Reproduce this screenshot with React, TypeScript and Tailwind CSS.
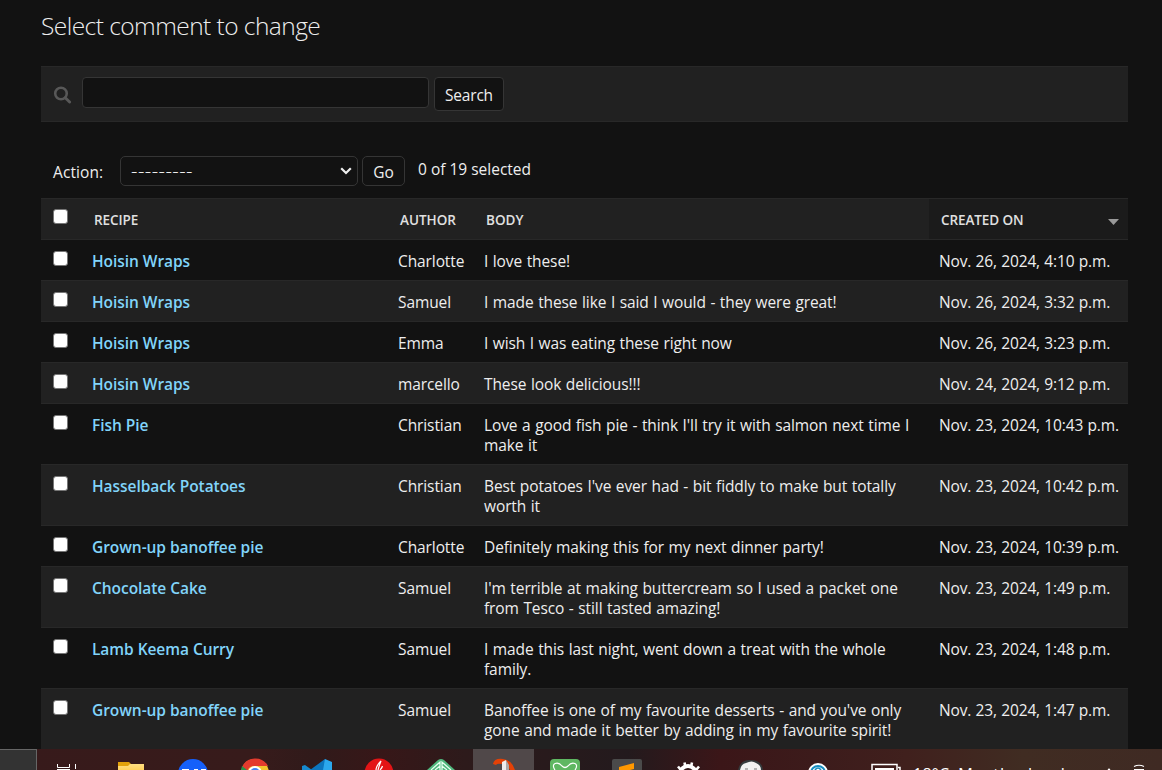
import React from "react";

const rows = [
  ["Hoisin Wraps", "Charlotte", ["I love these!"], "Nov. 26, 2024, 4:10 p.m."],
  ["Hoisin Wraps", "Samuel", ["I made these like I said I would - they were great!"], "Nov. 26, 2024, 3:32 p.m."],
  ["Hoisin Wraps", "Emma", ["I wish I was eating these right now"], "Nov. 26, 2024, 3:23 p.m."],
  ["Hoisin Wraps", "marcello", ["These look delicious!!!"], "Nov. 24, 2024, 9:12 p.m."],
  ["Fish Pie", "Christian", ["Love a good fish pie - think I'll try it with salmon next time I", "make it"], "Nov. 23, 2024, 10:43 p.m."],
  ["Hasselback Potatoes", "Christian", ["Best potatoes I've ever had - bit fiddly to make but totally", "worth it"], "Nov. 23, 2024, 10:42 p.m."],
  ["Grown-up banoffee pie", "Charlotte", ["Definitely making this for my next dinner party!"], "Nov. 23, 2024, 10:39 p.m."],
  ["Chocolate Cake", "Samuel", ["I'm terrible at making buttercream so I used a packet one", "from Tesco - still tasted amazing!"], "Nov. 23, 2024, 1:49 p.m."],
  ["Lamb Keema Curry", "Samuel", ["I made this last night, went down a treat with the whole", "family."], "Nov. 23, 2024, 1:48 p.m."],
  ["Grown-up banoffee pie", "Samuel", ["Banoffee is one of my favourite desserts - and you've only", "gone and made it better by adding in my favourite spirit!"], "Nov. 23, 2024, 1:47 p.m."],
] as [string, string, string[], string][];

const grid = "grid grid-cols-[51px_306px_86px_445px_199px]";

function Box() {
  return <span className="mt-[11px] ml-3 block h-[15px] w-[15px] rounded-[3px] border border-[#767676] bg-white" />;
}

function Taskbar() {
  return (
    <svg className="block h-[21px] w-[1162px] shrink-0" viewBox="0 0 1162 21">
      <defs>
        <linearGradient id="bar">
          <stop offset="0" stopColor="#371a1b" />
          <stop offset=".22" stopColor="#371b1b" />
          <stop offset=".27" stopColor="#301a1a" />
          <stop offset=".33" stopColor="#371718" />
          <stop offset=".4" stopColor="#2d1a1b" />
          <stop offset=".54" stopColor="#231a1d" />
          <stop offset=".62" stopColor="#3b1618" />
          <stop offset=".7" stopColor="#3c1b1b" />
          <stop offset=".78" stopColor="#40201d" />
          <stop offset=".88" stopColor="#402c22" />
          <stop offset="1" stopColor="#3f2a23" />
        </linearGradient>
        <linearGradient id="folder" x2="0" y2="1">
          <stop offset="0" stopColor="#ffdf83" />
          <stop offset="1" stopColor="#ffd25d" />
        </linearGradient>
      </defs>
      <rect width="1162" height="21" fill="url(#bar)" />
      <path d="M0 0H37V21H0Z" fill="#666" />
      <path d="M0 1H36V21H0Z" fill="#333" />
      <path d="M57.5 15V18.5H69.5V15M57 20.5H70M75.5 15V20" fill="none" stroke="#fff" />
      <path d="M118 13H129L131 15V21H118Z" fill="#e2a20b" />
      <path d="M118 17H128L130 15H144V21H118Z" fill="url(#folder)" />
      <circle cx="193" cy="25" r="15" fill="#1560fa" />
      <path d="M182 20.5H189M194 20.5H198M201 20.5H206" stroke="#fff" strokeWidth="1" />
      <circle cx="255" cy="24" r="14" fill="#f4c52c" />
      <path d="M242 18A14.5 14.5 0 0 1 268 17H255Q249 17 248 21H242Z" fill="#e33b2e" />
      <path d="M242 17L247 21H241Z" fill="#28954a" />
      <circle cx="255" cy="24" r="7" fill="#fff" />
      <circle cx="255" cy="24" r="5" fill="#4285f4" />
      <path d="M302 17L305 16L312 21H302Z" fill="#168ad0" />
      <path d="M310 21L325 10V21Z" fill="#0c75bd" />
      <path d="M325 10L332 13V21H323Z" fill="#2ba8ed" />
      <circle cx="379" cy="24" r="14.5" fill="#e31416" />
      <path d="M376 21Q376 17 381 12Q379 17 378 21M380 21Q382 19 382.5 17" fill="none" stroke="#fff" strokeWidth="1.2" />
      <path d="M427 21L438 11Q441 9 444 11L455 21Z" fill="#50b77d" />
      <path d="M431 21L440 13V21M451 21L442 13V21M435 21L440 17M447 21L442 17" fill="none" stroke="#e8fff1" strokeWidth="1.2" />
      <path d="M473 0H534V21H473Z" fill="#504849" />
      <path d="M493 15Q494 9 503 10Q512 11 515 21H510Q507 15 502 15Q497 14 496 16Z" fill="#e34106" />
      <path d="M502 13L506 11V21H502Z" fill="#eee" />
      <path d="M506 11L509 16V21H506Z" fill="#aaa" />
      <rect x="550" y="10" width="30" height="20" rx="4" fill="#5fb762" />
      <path d="M555 21C550 14 558 12 562 17Q565 20 568 17C572 12 580 14 575 21" fill="none" stroke="#fff" strokeWidth="1.2" />
      <rect x="612" y="10" width="30" height="20" rx="2" fill="#4a4a4a" />
      <path d="M619 18L634 14V20L630 21H619Z" fill="#ff9800" />
      <circle cx="688" cy="25" r="8" fill="none" stroke="#fff" strokeWidth="4" />
      <path d="M685.5 18L684.5 13.5M691 18L692 13.5M681 21L678 17.5M696 21L699 17.5" stroke="#fff" strokeWidth="2.6" />
      <path d="M738 21Q740 11 750 11Q762 11 763 21Z" fill="#353b3d" />
      <path d="M740 21Q741 15 746 14Q752 11 756 14Q761 16 761 21Z" fill="#f2f2f2" />
      <path d="M745 20H748M754 20H757" stroke="#777" />
      <circle cx="818" cy="24" r="10" fill="#fff" />
      <circle cx="818" cy="24" r="7" fill="none" stroke="#168dc0" strokeWidth="2" />
      <path d="M815 21Q818 17 821 21" fill="none" stroke="#168dc0" strokeWidth="1.6" />
      <path d="M872 21V15.5H897V21M898 18.5H900V21" fill="none" stroke="#fff" strokeWidth="1.5" />
      <path d="M875 19H894V21H875Z" fill="#fff" />
      <text x="913" y="31" fill="#fff" fontFamily="Open Sans, sans-serif" fontSize="16" textLength="36">18°C</text>
      <text x="958" y="31" fill="#fff" fontFamily="Open Sans, sans-serif" fontSize="16.5" textLength="116">Mostly cloudy</text>
      <path d="M1108 21L1109 20L1110 21M1134 17.5Q1139 15 1144 17.5M1134 20.5H1144" fill="none" stroke="#fff" strokeWidth="1.2" />
    </svg>
  );
}

export default function App() {
  return (
    <div className="flex h-[770px] w-[1162px] flex-col overflow-hidden bg-[#121212] font-['Open_Sans','Noto_Sans',sans-serif] text-[15.5px] leading-5 text-[#eeeeee]">
      <main className="flex h-[749px] shrink-0 flex-col overflow-hidden pr-[34px] pl-[41px]">
        <h1 className="h-[66px] shrink-0 pt-[10px] text-[24.5px] leading-[32px] font-[340] tracking-[-0.55px] whitespace-nowrap">Select comment to change</h1>
        <form className="flex h-14 shrink-0 items-start border-y border-[#282828] bg-[#212121] pt-[10px] pl-[12px]">
          <svg className="mt-[9px] h-[18px] w-[19px]" viewBox="0 0 19 19" fill="none" stroke="#585858">
            <circle cx="7.9" cy="7.9" r="6.1" strokeWidth="2.7" />
            <path d="M12.4 12.4L17 17" strokeWidth="3" strokeLinecap="round" />
          </svg>
          <input aria-label="Search" className="ml-[10px] h-[31px] w-[347px] rounded-[4px] border border-[#353535] bg-[#121212] outline-none" />
          <button type="button" className="ml-[5px] h-[34px] w-[70px] rounded-[4px] border border-[#353535] bg-[#121212] pt-px text-center tracking-[-0.2px]">Search</button>
        </form>
        <div className="flex h-[76px] shrink-0 items-start pt-[34px] pl-3">
          <span className="w-[67px] pt-[6px] tracking-[0.1px]">Action:</span>
          <div className="flex h-[30px] w-[238px] items-center justify-between rounded-[5px] border border-[#353535] pr-[5px] pl-[10px]">
            <span className="text-[20px] font-light tracking-[0.45px]">---------</span>
            <svg className="h-[10px] w-3" viewBox="0 0 12 10" fill="none" stroke="#eee" strokeWidth="2.2"><path d="M1.2 2.2L6 7L10.8 2.2" /></svg>
          </div>
          <button type="button" className="ml-1 h-[30px] w-[43px] rounded-[5px] border border-[#353535] pt-px text-center">Go</button>
          <span className="ml-[13px] pt-[3px]">0 of 19 selected</span>
        </div>
        <div className={grid + " h-[42px] shrink-0 border-y border-[#282828] bg-[#212121] text-[13.5px] font-semibold text-[#e0e0e0]"}>
          <span className="-mt-px"><Box /></span>
          <span className="pt-[11px] pl-[2px] tracking-[-0.1px]">RECIPE</span>
          <span className="pt-[11px] pl-[2px]">AUTHOR</span>
          <span className="pt-[11px] pl-[2px]">BODY</span>
          <span className="flex items-start justify-between bg-[#1b1b1b] pt-[11px] pr-[9px] pl-3 tracking-[-0.1px]">
            CREATED ON
            <svg className="mt-[9px] h-[6px] w-[11px]" viewBox="0 0 11 6"><path d="M0 0H11L5.5 6Z" fill="#999" /></svg>
          </span>
        </div>
        {rows.map(([recipe, author, body, date], i) => (
          <div key={i} className={grid + " shrink-0 border-b border-[#282828] " + (i % 2 ? "bg-[#212121]" : "bg-[#121212]")}>
            <Box />
            <a className="pt-[11px] font-semibold tracking-[-0.05px] text-[#81d4fa]">{recipe}</a>
            <span className="pt-[11px] tracking-[-0.1px]">{author}</span>
            <span className="pt-[11px] pb-[9px] tracking-[-0.1px] whitespace-nowrap [word-spacing:0.65px]">
              {body.map((line) => <span key={line} className="block">{line}</span>)}
            </span>
            <span className="pt-[11px] pl-[10px] tracking-[-0.15px] whitespace-nowrap [word-spacing:0.5px]">{date}</span>
          </div>
        ))}
      </main>
      <Taskbar />
    </div>
  );
}
